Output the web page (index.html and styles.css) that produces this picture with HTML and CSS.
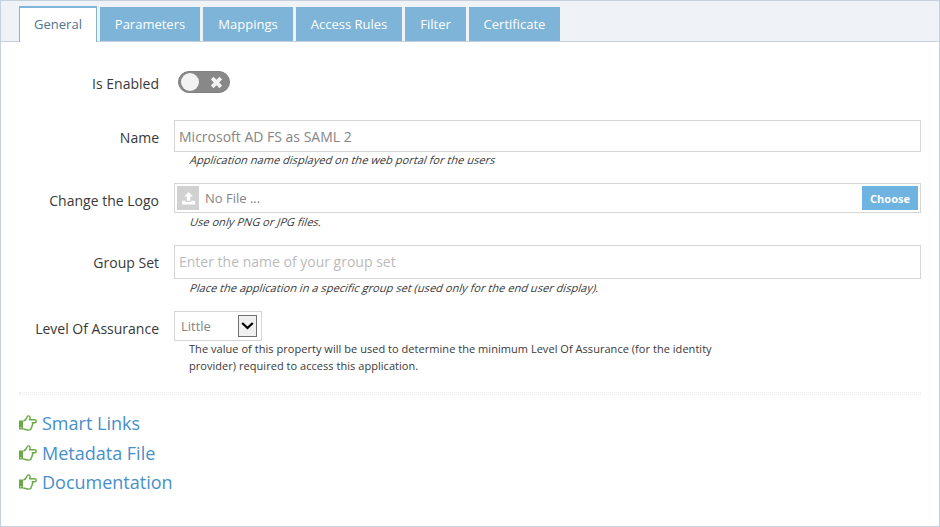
FILE: index.html
```html
<!DOCTYPE html>
<html lang="en">
<head>
<meta charset="utf-8">
<title>Application settings</title>
<link rel="stylesheet" href="styles.css">
</head>
<body>
<svg class="defs" width="0" height="0">
  <symbol id="hand" viewBox="0 0 18 16">
    <path d="M0 5.500h4v9H0z" fill="#69aa46"/>
    <path d="M1.300 12.200h1.100v1.100H1.300z" fill="#fff"/>
    <path d="M4.300 6C6 6 7.100 4.300 7.800 2.600 8.100 1.300 8.700.8 9.600.9c1.600.2 1.900 1.700 1 3.900h5c2.200 0 2.200 3 0 3h-2.400c.9.9.7 2-.2 2.500.4 1-.1 1.900-.8 2.200.2 1.800-.8 2.600-2.500 2.600-2.300 0-3.400-1-5.500-1.100" fill="none" stroke="#69aa46" stroke-width="1.400" stroke-linejoin="round"/>
  </symbol>
</svg>
<div class="panel">
  <nav class="tabs">
    <a class="tab active">General</a>
    <a class="tab parameters">Parameters</a>
    <a class="tab mappings">Mappings</a>
    <a class="tab rules">Access Rules</a>
    <a class="tab filter">Filter</a>
    <a class="tab certificate">Certificate</a>
  </nav>
  <main class="content">
    <div class="row row-enabled">
      <label>Is Enabled</label>
      <div class="switch"><span class="knob"></span>
        <svg width="13" height="13" viewBox="0 0 12 12"><path d="M2 2l8 8M10 2L2 10" stroke="#f2f2f2" stroke-width="3.500"/></svg>
      </div>
    </div>
    <div class="row row-name">
      <label>Name</label>
      <div class="field"><div class="input name">Microsoft AD FS as SAML 2</div>
      <p class="help slanted">Application name displayed on the web portal for the users</p></div>
    </div>
    <div class="row row-logo">
      <label>Change the Logo</label>
      <div class="field"><div class="input file">
        <span class="upload"><svg width="13" height="13" viewBox="0 0 12 12"><path d="M6 0l4 4.200H7.600V8H4.400V4.200H2zM0 8h3.500v1.200h5V8H12v3.500H0z" fill="#fff"/></svg></span>
        <span class="filename">No File ...</span><span class="choose">Choose</span></div>
      <p class="help slanted">Use only PNG or JPG files.</p></div>
    </div>
    <div class="row row-group">
      <label>Group Set</label>
      <div class="field"><div class="input group">Enter the name of your group set</div>
      <p class="help slanted">Place the application in a specific group set (used only for the end user display).</p></div>
    </div>
    <div class="row row-level">
      <label>Level Of Assurance</label>
      <div class="field"><div class="input select"><span>Little</span>
        <span class="arrow"><svg width="13" height="9" viewBox="0 0 13 9"><path d="M1.200 1l5.300 5 5.300-5" fill="none" stroke="#000" stroke-width="2.200"/></svg></span></div>
      <p class="help plain">The value of this property will be used to determine the minimum Level Of Assurance (for the identity<br>provider) required to access this application.</p></div>
    </div>
    <div class="divider"></div>
    <ul class="links">
      <li><svg width="18" height="16"><use href="#hand"/></svg><a>Smart Links</a></li>
      <li><svg width="18" height="16"><use href="#hand"/></svg><a>Metadata File</a></li>
      <li><svg width="18" height="16"><use href="#hand"/></svg><a>Documentation</a></li>
    </ul>
  </main>
</div>
</body>
</html>
```
FILE: styles.css
```css
* { box-sizing: border-box; }
body { margin: 0; font-family: "Open Sans", sans-serif; font-size: 14px; color: #393939; background: #fff; }
.defs { position: absolute; }
.panel { width: 940px; height: 527px; border: 1px solid #c5d0dc; overflow: hidden; }
.tabs { display: flex; align-items: flex-end; gap: 3px; height: 41px; padding-left: 18px; background: #eff3f8; border-bottom: 1px solid #c5d0dc; }
.tab { height: 34px; display: flex; align-items: center; justify-content: center; background: #7db4d8; color: #fff; font-size: 13px; white-space: nowrap; }
.tab.active { width: 78px; height: 36px; margin-bottom: -1px; padding-bottom: 2px; background: #fff; color: #4f7390; border: 1px solid #7db4d8; border-top-width: 2px; border-bottom: 0; }
.parameters { width: 100px; }
.mappings { width: 90px; }
.rules { width: 106px; }
.filter { width: 61px; }
.certificate { width: 91px; }
.content { padding: 0 18px; }
.row { display: grid; grid-template-columns: 140px 747px; column-gap: 15px; }
label { text-align: right; line-height: 20px; white-space: nowrap; justify-self: end; }
.row-enabled { height: 78px; padding-top: 29px; }
.row-enabled label { padding-top: 3px; }
.switch { width: 52px; height: 22px; margin-left: 4px; border-radius: 11px; background: #888; border: 1px solid #808080; display: flex; align-items: center; padding-left: 2px; gap: 11px; }
.knob { width: 18px; height: 18px; border-radius: 50%; background: #f2f2f2; }
.row-name { height: 63px; }
.row-logo { height: 62px; }
.row-group { height: 66px; }
.row-level { height: 81px; }
.row:not(.row-enabled) label { padding-top: 8px; }
.input { display: flex; align-items: center; border: 1px solid #d5d5d5; padding-left: 4px; color: #858585; white-space: nowrap; }
.name { height: 32px; }
.file { height: 30px; padding: 2px; font-size: 13px; }
.upload { width: 22px; height: 24px; display: flex; align-items: center; justify-content: center; background: #d1d1d1; }
.filename { margin-left: 6px; flex: 1; }
.choose { width: 56px; height: 24px; line-height: 25px; text-align: center; background: #6fb3e0; color: #fff; font-size: 11px; font-weight: 700; }
.group { height: 34px; padding-bottom: 2px; color: #bbb; }
.select { width: 88px; height: 30px; padding: 0 4px 0 6px; justify-content: space-between; font-size: 13px; }
.arrow { width: 19px; height: 22px; display: flex; align-items: center; justify-content: center; background: #f0f0f0; border: 1px solid #707070; }
.help { margin: 0 0 0 15px; font-size: 11px; line-height: 17px; letter-spacing: .04px; white-space: nowrap; }
.slanted { transform: skewX(-18deg); transform-origin: 0 13px; }
.name + .help { margin-top: -1px; }
.plain { margin-top: -1px; }
.divider { height: 3px; border-top: 1px dotted #e8e8e8; border-bottom: 1px dotted #e8e8e8; }
.links { list-style: none; margin: 0; padding: 13px 0 0; }
.links li { display: flex; align-items: center; gap: 5px; height: 29px; font-size: 18px; color: #478fca; }
.links li:nth-child(2) { margin-top: 1px; }
.links svg { margin-top: 1px; }
```
